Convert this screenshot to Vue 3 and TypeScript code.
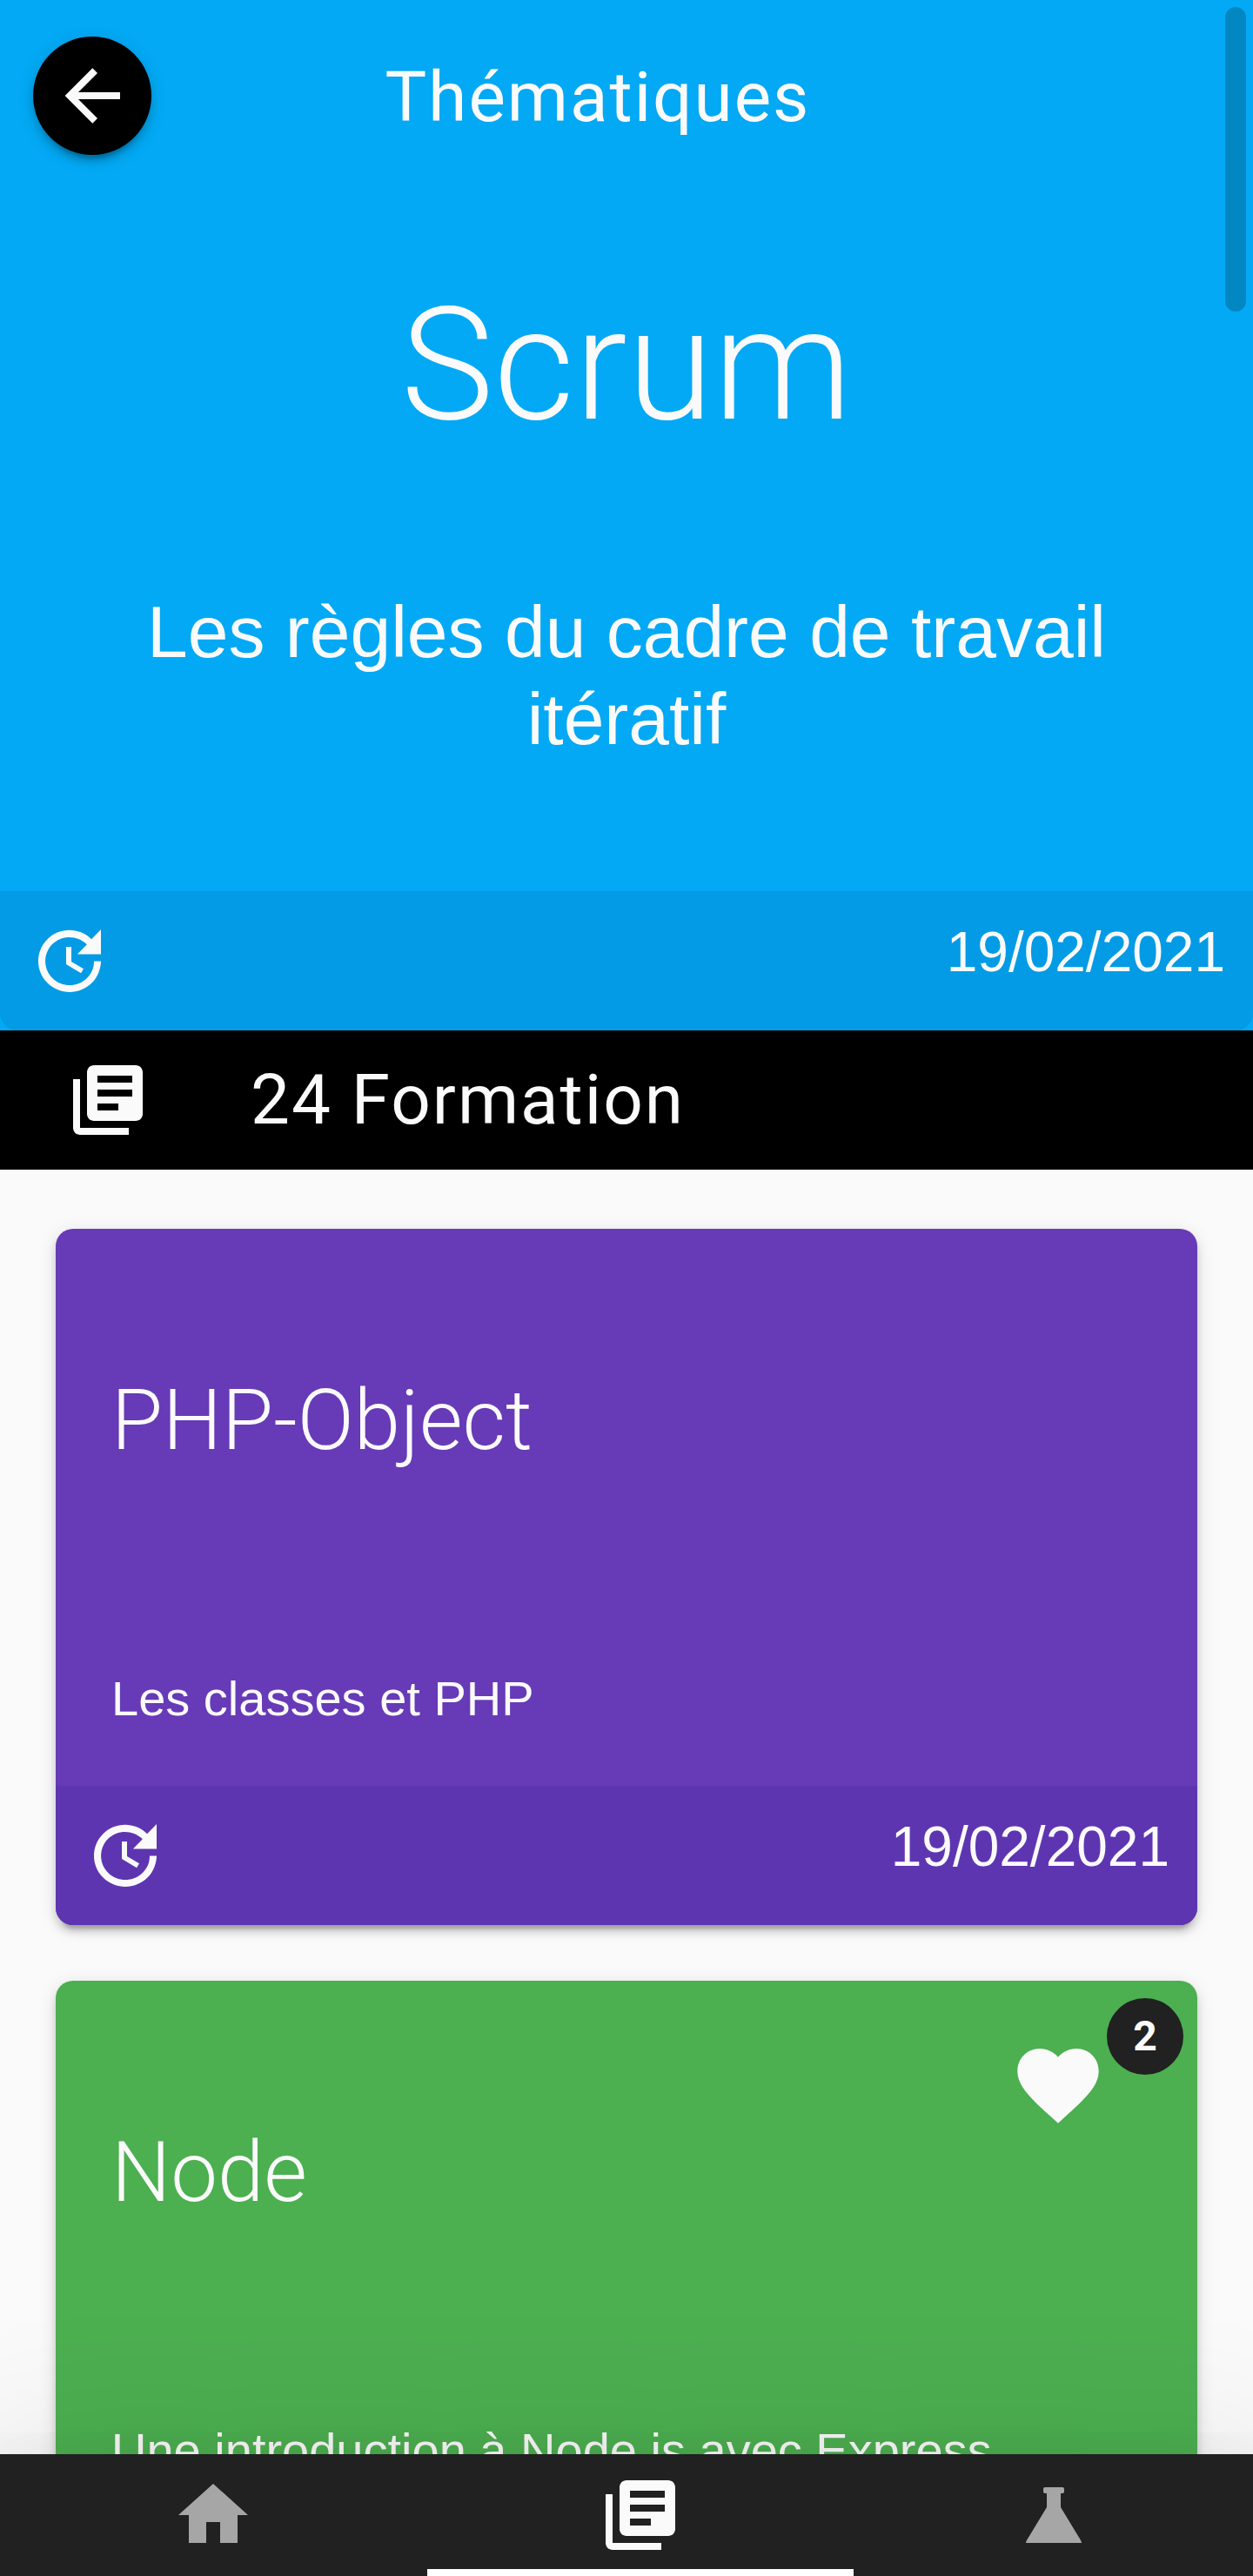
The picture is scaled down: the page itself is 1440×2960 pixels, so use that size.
<script setup lang="ts">
interface Course {
  title: string
  description: string
  date: string
  color: string
  footerColor: string
  likes?: number
}

const courses: Course[] = [
  {
    title: 'PHP-Object',
    description: 'Les classes et PHP',
    date: '19/02/2021',
    color: '#673ab7',
    footerColor: '#5e35b1',
  },
  {
    title: 'Node',
    description: 'Une introduction à Node.js avec Express',
    date: '19/02/2021',
    color: '#4caf50',
    footerColor: '#43a047',
    likes: 2,
  },
]

const icons = {
  back: 'M20,11V13H8L13.5,18.5L12.08,19.92L4.16,12L12.08,4.08L13.5,5.5L8,11H20Z',
  update:
    'M21,10.12H14.22L16.96,7.3C14.23,4.6 9.81,4.5 7.08,7.2C4.35,9.91 4.35,14.28 7.08,17C9.81,19.7 14.23,19.7 16.96,17C18.32,15.65 19,14.08 19,12.1H21C21,14.08 20.12,16.65 18.36,18.39C14.85,21.87 9.15,21.87 5.64,18.39C2.14,14.92 2.11,9.28 5.62,5.81C9.13,2.34 14.76,2.34 18.27,5.81L21,3V10.12M12.5,8V12.25L16,14.33L15.28,15.54L11,13V8H12.5Z',
  library:
    'M4 6H2v14c0 1.1.9 2 2 2h14v-2H4V6zm16-4H8c-1.1 0-2 .9-2 2v12c0 1.1.9 2 2 2h12c1.1 0 2-.9 2-2V4c0-1.1-.9-2-2-2zm-1 9H9V9h10v2zm-4 4H9v-2h6v2zm4-8H9V5h10v2z',
  heart:
    'M12,21.35L10.55,20.03C5.4,15.36 2,12.27 2,8.5C2,5.41 4.42,3 7.5,3C9.24,3 10.91,3.81 12,5.08C13.09,3.81 14.76,3 16.5,3C19.58,3 22,5.41 22,8.5C22,12.27 18.6,15.36 13.45,20.03L12,21.35Z',
  home: 'M10,20V14H14V20H19V12H22L12,3L2,12H5V20H10Z',
  flask: 'M20 2q0-2 2-2h20q2 0 2 2v3q0 2-2 2h-2v16l20 33q4 6 4 8H0q0-2 4-8l20-33V7h-2q-2 0-2-2z',
}
</script>

<template>
  <div class="app">
    <main class="content">
      <section class="hero">
        <header class="bar">
          <button class="back" type="button" aria-label="Retour">
            <svg class="icon" viewBox="0 0 24 24" aria-hidden="true"><path :d="icons.back" /></svg>
          </button>
          <h2 class="bar-title">Thématiques</h2>
        </header>
        <h1 class="hero-title">Scrum</h1>
        <p class="hero-text">Les règles du cadre de travail itératif</p>
        <div class="meta hero-meta">
          <svg class="icon" viewBox="0 0 24 24" aria-hidden="true"><path :d="icons.update" /></svg>
          <time class="date" datetime="2021-02-19">19/02/2021</time>
        </div>
      </section>

      <div class="count">
        <svg class="icon" viewBox="0 0 24 24" aria-hidden="true"><path :d="icons.library" /></svg>
        <h2 class="count-title">24 Formation</h2>
      </div>

      <div class="cards">
        <article
          v-for="course in courses"
          :key="course.title"
          class="card"
          :style="{ backgroundColor: course.color }"
        >
          <button v-if="course.likes" class="like" type="button" aria-label="Favoris">
            <svg class="heart" viewBox="0 0 24 24" aria-hidden="true"><path :d="icons.heart" /></svg>
            <span class="badge">{{ course.likes }}</span>
          </button>
          <div class="card-body">
            <h3 class="card-title">{{ course.title }}</h3>
            <p class="card-text">{{ course.description }}</p>
          </div>
          <div class="meta" :style="{ backgroundColor: course.footerColor }">
            <svg class="icon" viewBox="0 0 24 24" aria-hidden="true"><path :d="icons.update" /></svg>
            <time class="date" datetime="2021-02-19">{{ course.date }}</time>
          </div>
        </article>
      </div>
    </main>

    <div class="scroll-thumb" aria-hidden="true"></div>

    <nav class="tabs">
      <a class="tab" href="#accueil" aria-label="Accueil">
        <svg class="icon" viewBox="0 0 24 24" aria-hidden="true"><path :d="icons.home" /></svg>
      </a>
      <a class="tab active" href="#thematiques" aria-label="Thématiques" aria-current="page">
        <svg class="icon" viewBox="0 0 24 24" aria-hidden="true"><path :d="icons.library" /></svg>
      </a>
      <a class="tab" href="#labo" aria-label="Labo">
        <svg class="flask" viewBox="0 0 64 64" aria-hidden="true"><path :d="icons.flask" /></svg>
      </a>
    </nav>
  </div>
</template>

<style>
body {
  margin: 0;
  background: #fafafa;
}
</style>

<style scoped>
.app {
  position: relative;
  height: 100vh;
  overflow: hidden;
  display: flex;
  flex-direction: column;
  background: #fafafa;
  color: #fafafa;
  font-family: Roboto, sans-serif;
}

.content {
  flex: 1;
  min-height: 0;
  overflow: hidden;
}

h1,
h2,
h3,
p {
  margin: 0;
}

svg {
  display: block;
  flex: none;
  fill: currentColor;
}

.icon {
  width: 96px;
  height: 96px;
}

button {
  border: 0;
  padding: 0;
  color: inherit;
  font: inherit;
  cursor: pointer;
}

.hero {
  display: flex;
  flex-direction: column;
  background: #03a9f4;
}

.bar {
  display: flex;
  align-items: center;
  padding: 42px 240px 46px 38px;
}

.back {
  display: flex;
  align-items: center;
  justify-content: center;
  width: 136px;
  height: 136px;
  border-radius: 50%;
  background: #000;
  box-shadow:
    0 12px 4px -8px rgba(0, 0, 0, 0.2),
    0 8px 8px 0 rgba(0, 0, 0, 0.14),
    0 4px 20px 0 rgba(0, 0, 0, 0.12);
}

.bar-title {
  flex: 1;
  padding-top: 4px;
  text-align: center;
  font-size: 80px;
  line-height: 128px;
  font-weight: 400;
  letter-spacing: 2px;
}

.hero-title {
  padding-top: 100px;
  text-align: center;
  font-size: 180px;
  line-height: 192px;
  font-weight: 300;
}

.hero-text {
  padding: 160px 128px 148px;
  text-align: center;
  font-family: "Liberation Sans", Arial, sans-serif;
  font-size: 84px;
  line-height: 100px;
}

.meta {
  display: flex;
  align-items: flex-start;
  justify-content: space-between;
  height: 128px;
  padding: 32px 32px 0;
  border-radius: 0 0 20px 20px;
}

.hero-meta {
  background: #039be5;
}

.date {
  font-family: "Liberation Sans", Arial, sans-serif;
  font-size: 64px;
  line-height: 76px;
}

.count {
  display: flex;
  align-items: center;
  gap: 116px;
  height: 160px;
  padding: 0 76px;
  background: #000;
}

.count-title {
  font-size: 80px;
  line-height: 128px;
  font-weight: 400;
  letter-spacing: 2px;
}

.cards {
  display: flex;
  flex-direction: column;
  gap: 64px;
  padding: 68px 64px;
}

.card {
  position: relative;
  border-radius: 20px;
  box-shadow:
    0 12px 4px -8px rgba(0, 0, 0, 0.2),
    0 8px 8px 0 rgba(0, 0, 0, 0.14),
    0 4px 20px 0 rgba(0, 0, 0, 0.12);
}

.card-body {
  display: flex;
  flex-direction: column;
  justify-content: space-between;
  height: 416px;
  padding: 156px 64px 68px;
}

.card-title {
  font-size: 96px;
  line-height: 128px;
  font-weight: 300;
}

.card-text {
  font-family: "Liberation Sans", Arial, sans-serif;
  font-size: 56px;
  line-height: 64px;
}

.like {
  position: absolute;
  top: 64px;
  right: 104px;
  background: none;
}

.heart {
  width: 112px;
  height: 112px;
}

.badge {
  position: absolute;
  bottom: calc(100% - 44px);
  left: 100%;
  width: 88px;
  border-radius: 50%;
  background: #212121;
  font-size: 48px;
  line-height: 88px;
  font-weight: 700;
  text-align: center;
}

.scroll-thumb {
  position: absolute;
  top: 8px;
  right: 8px;
  width: 24px;
  height: 350px;
  border-radius: 12px;
  background: rgba(0, 0, 0, 0.2);
}

.tabs {
  position: relative;
  display: flex;
  background: #212121;
  box-shadow:
    0 44px 60px -28px rgba(0, 0, 0, 0.2),
    0 96px 152px 12px rgba(0, 0, 0, 0.14),
    0 36px 184px 32px rgba(0, 0, 0, 0.12);
}

.tab {
  flex: 1 1 auto;
  display: flex;
  align-items: center;
  justify-content: center;
  height: 140px;
  color: rgba(255, 255, 255, 0.6);
}

.tab.active {
  color: #fafafa;
  box-shadow: inset 0 -8px 0 #fff;
}

.flask {
  width: 64px;
  height: 64px;
}
</style>
